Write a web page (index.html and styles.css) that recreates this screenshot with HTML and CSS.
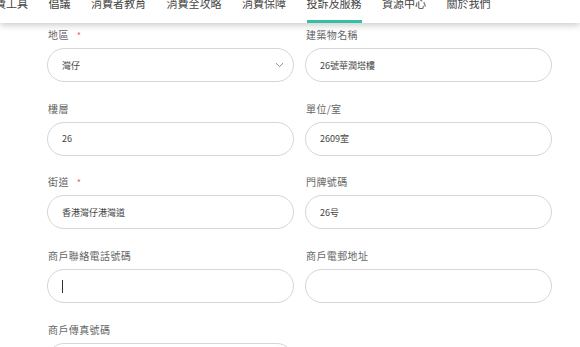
FILE: index.html
```html
<!DOCTYPE html>
<html lang="zh-Hant">
<head>
<meta charset="utf-8">
<link rel="stylesheet" href="styles.css">
</head>
<body>
<header class="nav">
  <ul class="nav-list">
    <li>消費工具</li>
    <li>倡議</li>
    <li>消費者教育</li>
    <li>消費全攻略</li>
    <li>消費保障</li>
    <li class="active">投訴及服務</li>
    <li>資源中心</li>
    <li>關於我們</li>
  </ul>
</header>
<main class="form">
  <div class="field">
    <label class="label">地區<span class="req">*</span></label>
    <div class="input select">灣仔
      <svg class="chev" width="9" height="6" viewBox="0 0 9 6"><path d="M1 1.2 L4.5 4.6 L8 1.2" fill="none" stroke="#8a8a8a" stroke-width="1"/></svg>
    </div>
  </div>
  <div class="field">
    <label class="label">建築物名稱</label>
    <div class="input">26號華潤塔樓</div>
  </div>
  <div class="field">
    <label class="label">樓層</label>
    <div class="input">26</div>
  </div>
  <div class="field">
    <label class="label">單位/室</label>
    <div class="input">2609室</div>
  </div>
  <div class="field">
    <label class="label">街道<span class="req">*</span></label>
    <div class="input">香港灣仔港灣道</div>
  </div>
  <div class="field">
    <label class="label">門牌號碼</label>
    <div class="input">26号</div>
  </div>
  <div class="field">
    <label class="label">商戶聯絡電話號碼</label>
    <div class="input"><span class="caret"></span></div>
  </div>
  <div class="field">
    <label class="label">商戶電郵地址</label>
    <div class="input"></div>
  </div>
  <div class="field">
    <label class="label">商戶傳真號碼</label>
    <div class="input"></div>
  </div>
</main>
</body>
</html>
```
FILE: styles.css
```css
* { box-sizing: border-box; }
html, body { margin: 0; padding: 0; background: #fff; overflow: hidden; height: 347px; }
body {
  font-family: "Noto Sans CJK TC", "Noto Sans", sans-serif;
  color: #444;
}
.nav {
  position: relative;
  z-index: 2;
  height: 23px;
  background: #fff;
  box-shadow: 0 2px 7px rgba(0,0,0,0.22);
  overflow: hidden;
}
.nav-list {
  list-style: none;
  margin: -4px 0 0 -16px;
  padding: 0;
  display: flex;
  gap: 20.5px;
  font-size: 11px;
  line-height: 14px;
  color: #444;
  white-space: nowrap;
}
.nav-list li {
  position: relative;
  height: 27px;
}
.nav-list li.active::after {
  content: "";
  position: absolute;
  left: 0;
  right: 0;
  bottom: 0;
  height: 3px;
  background: #35bfa4;
}
.form {
  display: grid;
  grid-template-columns: 247px 247px;
  column-gap: 11px;
  row-gap: 19.7px;
  padding: 5px 0 0 47px;
}
.field { display: flex; flex-direction: column; }
.label {
  font-size: 10px;
  line-height: 14px;
  height: 14px;
  margin: 0 0 6px 1px;
  color: #666;
  letter-spacing: 0.4px;
}
.req { color: #e8636b; margin-left: 8px; font-size: 9px; }
.input {
  height: 34px;
  border: 1px solid #d6d6d6;
  border-radius: 17px;
  padding: 0 14px;
  font-size: 9px;
  color: #444;
  display: flex;
  align-items: center;
  background: #fff;
}
.select { justify-content: space-between; padding-right: 9px; }
.chev { margin-right: 0; }
.caret {
  display: block;
  width: 1px;
  height: 13px;
  background: #333;
  margin-left: 0;
}
```
